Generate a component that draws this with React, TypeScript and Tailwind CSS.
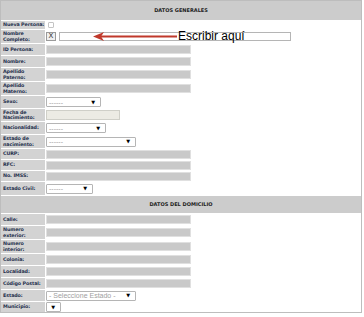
import React from "react";

type Row = {
  label: string;
  h: string;
  kind: "gray" | "check" | "nombre" | "select" | "date" | "none";
  w?: string;
  text?: string;
};

const generales: Row[] = [
  { label: "Nueva Persona:", h: "h-[8px]", kind: "check" },
  { label: "Nombre Completo:", h: "h-[13px]", kind: "nombre" },
  { label: "ID Persona:", h: "h-[11px]", kind: "gray" },
  { label: "Nombre:", h: "h-[11px]", kind: "gray" },
  { label: "Apellido Paterno:", h: "h-[13px]", kind: "gray" },
  { label: "Apellido Materno:", h: "h-[13px]", kind: "gray" },
  { label: "Sexo:", h: "h-[12px]", kind: "select", w: "w-[55px]", text: "------" },
  { label: "Fecha de Nacimiento:", h: "h-[12px]", kind: "date" },
  { label: "Nacionalidad:", h: "h-[12px]", kind: "select", w: "w-[60px]", text: "------" },
  { label: "Estado de nacimiento:", h: "h-[13px]", kind: "select", w: "w-[90px]", text: "------" },
  { label: "CURP:", h: "h-[10px]", kind: "gray" },
  { label: "RFC:", h: "h-[10px]", kind: "gray" },
  { label: "No. IMSS:", h: "h-[10px]", kind: "gray" },
  { label: "Estado Civil:", h: "h-[13px]", kind: "select", w: "w-[47px]", text: "------" },
];

const domicilio: Row[] = [
  { label: "Calle:", h: "h-[11px]", kind: "gray" },
  { label: "Numero exterior:", h: "h-[13px]", kind: "gray" },
  { label: "Numero interior:", h: "h-[13px]", kind: "gray" },
  { label: "Colonia:", h: "h-[11px]", kind: "gray" },
  { label: "Localidad:", h: "h-[11px]", kind: "gray" },
  { label: "Código Postal:", h: "h-[11px]", kind: "gray" },
  { label: "Estado:", h: "h-[11px]", kind: "select", w: "w-[90px]", text: "- Seleccione Estado -" },
  { label: "Municipio:", h: "h-[10px]", kind: "select", w: "w-[15px]", text: "" },
];

function Field({ row }: { row: Row }) {
  if (row.kind === "gray")
    return <div className="w-[145px] h-[9px] bg-[#c9c9c9] border border-[#e0e0e0]" />;
  if (row.kind === "date")
    return <div className="w-[74px] h-[10px] bg-[#ecebe4] border border-[#cfcfc8]" />;
  if (row.kind === "check")
    return <div className="ml-[2px] w-[6px] h-[6px] border border-[#c4c4c4] rounded-[1px] bg-white" />;
  if (row.kind === "nombre")
    return (
      <div className="flex items-center gap-[3px]">
        <div className="w-[10px] h-[9px] border border-[#9a9a9a] bg-[#efefef] flex items-center justify-center text-[7px] leading-none text-[#333]">X</div>
        <div className="w-[232px] h-[9px] border border-[#b5b5b5] bg-white" />
      </div>
    );
  if (row.kind === "select")
    return (
      <div className={`${row.w} h-[10px] border border-[#b5b5b5] rounded-[1px] bg-white flex items-center justify-between pl-[2px] pr-[5px]`}>
        <span className="text-[7px] leading-none text-[#a0a0a0] whitespace-nowrap" style={{ fontFamily: '"Liberation Sans", Arial, sans-serif' }}>{row.text}</span>
        <span className="text-[5px] leading-none text-black">▼</span>
      </div>
    );
  return null;
}

function Section({ rows }: { rows: Row[] }) {
  return (
    <>
      {rows.map((r) => (
        <div key={r.label} className={`flex gap-[1px] overflow-hidden ${r.h}`}>
          <div className="w-[44px] shrink-0 bg-[#d3d3d3] pl-[2px] flex items-center text-[4.8px] leading-[5.5px] font-bold text-[#25304d] tracking-[-0.1px]">
            {r.label}
          </div>
          <div className="flex-1 flex items-center bg-white">
            <Field row={r} />
          </div>
        </div>
      ))}
    </>
  );
}

export default function App() {
  return (
    <div className="w-[364px] h-[317px] bg-white relative" style={{ fontFamily: '"DejaVu Sans", Verdana, sans-serif' }}>
      <div className="w-[362px] border border-[#bdbdbd] flex flex-col gap-[1px] bg-white">
        <div className="h-[19px] bg-[#cccccc] flex items-center justify-center text-[5px] font-bold text-[#222]">
          DATOS GENERALES
        </div>
        <Section rows={generales} />
        <div className="h-[17px] bg-[#cccccc] flex items-center justify-center text-[5px] font-bold text-[#222]">
          DATOS DEL DOMICILIO
        </div>
        <Section rows={domicilio} />
      </div>

      {/* anotacion */}
      <svg className="absolute left-[93px] top-[31px]" width="84" height="11" viewBox="0 0 84 11">
        <line x1="8" y1="5.5" x2="84" y2="5.5" stroke="#c0392b" strokeWidth="2" />
        <path d="M0 5.5 L11 1 L8 5.5 L11 10 Z" fill="#c0392b" />
      </svg>
      <span className="absolute left-[178px] top-[30px] text-[12px] leading-[13px] text-black" style={{ fontFamily: '"Liberation Sans", Arial, sans-serif' }}>
        Escribir aquí
      </span>
    </div>
  );
}
